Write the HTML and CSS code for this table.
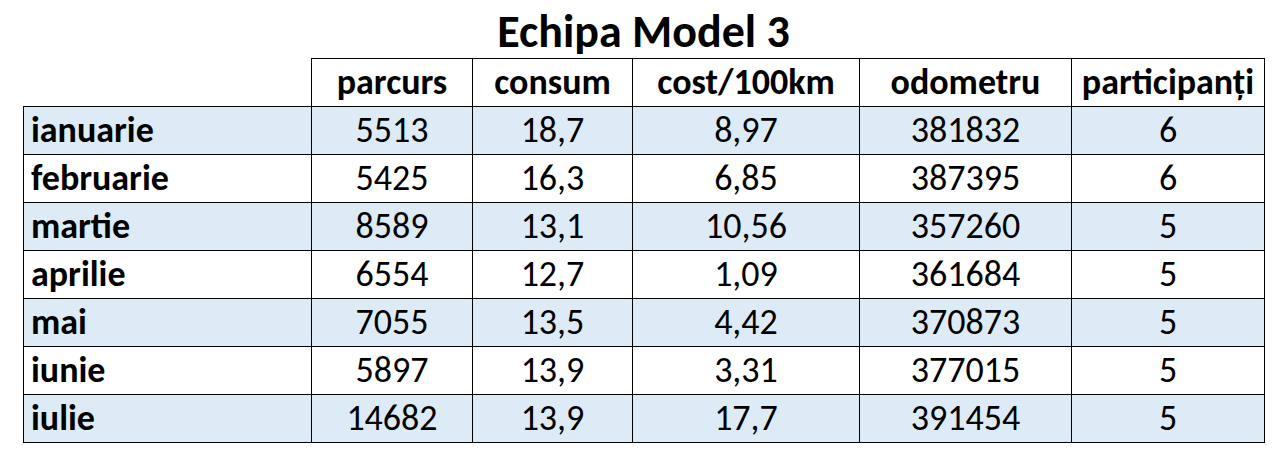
FILE: index.html
```html
<!DOCTYPE html>
<html lang="ro">
<head>
<meta charset="utf-8">
<title>Echipa Model 3</title>
<link rel="stylesheet" href="styles.css">
</head>
<body>
<h1 class="title">Echipa Model 3</h1>
<table class="sheet">
  <colgroup>
    <col class="c-month">
    <col class="c-parcurs">
    <col class="c-consum">
    <col class="c-cost">
    <col class="c-odo">
    <col class="c-part">
  </colgroup>
  <thead>
    <tr>
      <th class="blank"></th>
      <th>parcurs</th>
      <th>consum</th>
      <th>cost/100km</th>
      <th>odometru</th>
      <th>participanți</th>
    </tr>
  </thead>
  <tbody>
    <tr class="shade"><th>ianuarie</th><td>5513</td><td>18,7</td><td>8,97</td><td>381832</td><td>6</td></tr>
    <tr><th>februarie</th><td>5425</td><td>16,3</td><td>6,85</td><td>387395</td><td>6</td></tr>
    <tr class="shade"><th>martie</th><td>8589</td><td>13,1</td><td>10,56</td><td>357260</td><td>5</td></tr>
    <tr><th>aprilie</th><td>6554</td><td>12,7</td><td>1,09</td><td>361684</td><td>5</td></tr>
    <tr class="shade"><th>mai</th><td>7055</td><td>13,5</td><td>4,42</td><td>370873</td><td>5</td></tr>
    <tr><th>iunie</th><td>5897</td><td>13,9</td><td>3,31</td><td>377015</td><td>5</td></tr>
    <tr class="shade"><th>iulie</th><td>14682</td><td>13,9</td><td>17,7</td><td>391454</td><td>5</td></tr>
  </tbody>
</table>
</body>
</html>
```
FILE: styles.css
```css
html, body {
  margin: 0;
  padding: 0;
  background: #ffffff;
}

body {
  font-family: Carlito, Calibri, Lato, "Liberation Sans", sans-serif;
  color: #000000;
}

.title {
  margin: 0;
  height: 58px;
  line-height: 62px;
  font-size: 46px;
  font-weight: 700;
  text-align: center;
  padding-left: 0;
}

.sheet {
  margin-left: 23px;
  border-collapse: collapse;
  table-layout: fixed;
  width: 1241px;
  font-size: 36px;
}

.c-month { width: 288px; }
.c-parcurs { width: 161px; }
.c-consum { width: 160px; }
.c-cost { width: 227px; }
.c-odo { width: 212px; }
.c-part { width: 193px; }

.sheet th,
.sheet td {
  border: 1px solid #000000;
  height: 47px;
  padding: 0;
  line-height: 47px;
  white-space: nowrap;
  vertical-align: middle;
}

.sheet thead th {
  font-weight: 700;
  text-align: center;
}

.sheet thead th.blank {
  border-top: none;
  border-left: none;
}

.sheet tbody th {
  font-weight: 700;
  text-align: left;
  padding-left: 7px;
}

.sheet tbody td {
  font-weight: 400;
  text-align: center;
}

.sheet tr.shade th,
.sheet tr.shade td {
  background: #ddebf7;
}
```
